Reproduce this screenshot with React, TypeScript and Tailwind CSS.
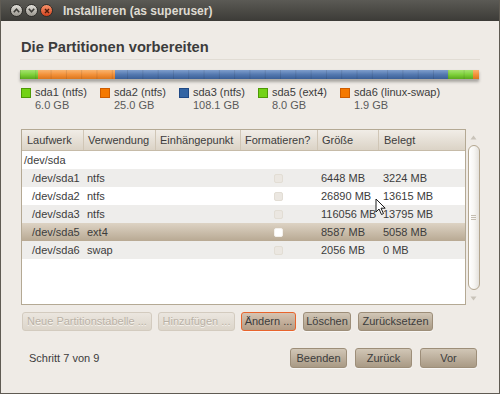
import type { ReactNode } from "react";

type Segment = { gb: number; cls: string };

const segments: Segment[] = [
  { gb: 6.0, cls: "bg-linear-to-b from-[#a6e36f] via-[#7fd13b] to-[#5aa91a]" },
  { gb: 25.0, cls: "bg-linear-to-b from-[#f9b46e] via-[#f3923a] to-[#db761c]" },
  { gb: 108.1, cls: "bg-linear-to-b from-[#809fcd] via-[#5479b0] to-[#3b5f97]" },
  { gb: 8.0, cls: "bg-linear-to-b from-[#a6e36f] via-[#7fd13b] to-[#5aa91a]" },
  { gb: 1.9, cls: "bg-linear-to-b from-[#f9b46e] via-[#f3923a] to-[#db761c]" },
];

const total = segments.reduce((s, p) => s + p.gb, 0);

const legend = [
  { name: "sda1 (ntfs)", size: "6.0 GB", box: "bg-[#73d216] border-[#4e9a06]" },
  { name: "sda2 (ntfs)", size: "25.0 GB", box: "bg-[#f57900] border-[#ce5c00]" },
  { name: "sda3 (ntfs)", size: "108.1 GB", box: "bg-[#3465a4] border-[#204a87]" },
  { name: "sda5 (ext4)", size: "8.0 GB", box: "bg-[#73d216] border-[#4e9a06]" },
  { name: "sda6 (linux-swap)", size: "1.9 GB", box: "bg-[#f57900] border-[#ce5c00]" },
];

const rows = [
  { dev: "/dev/sda", use: "", size: "", used: "", child: false, bg: "bg-white", sel: false },
  { dev: "/dev/sda1", use: "ntfs", size: "6448 MB", used: "3224 MB", child: true, bg: "bg-[#eeedeb]", sel: false },
  { dev: "/dev/sda2", use: "ntfs", size: "26890 MB", used: "13615 MB", child: true, bg: "bg-white", sel: false },
  { dev: "/dev/sda3", use: "ntfs", size: "116056 MB", used: "13795 MB", child: true, bg: "bg-[#eeedeb]", sel: false },
  { dev: "/dev/sda5", use: "ext4", size: "8587 MB", used: "5058 MB", child: true, bg: "bg-linear-to-b from-[#ddd3c4] to-[#b8a993]", sel: true },
  { dev: "/dev/sda6", use: "swap", size: "2056 MB", used: "0 MB", child: true, bg: "bg-[#eeedeb]", sel: false },
];

const headers = ["Laufwerk", "Verwendung", "Einhängepunkt", "Formatieren?", "Größe", "Belegt"];

function Button({
  children,
  w,
  disabled,
  focus,
  className = "",
}: {
  children: ReactNode;
  w: string;
  disabled?: boolean;
  focus?: boolean;
  className?: string;
}) {
  if (disabled) {
    return (
      <div
        className={`${w} ${className} h-full flex items-center justify-center rounded-[3px] border border-[#d3cbbf] bg-linear-to-b from-[#ebe6df] to-[#dcd5ca] text-[#b9b1a6] [text-shadow:0_1px_0_#f7f4ef]`}
      >
        {children}
      </div>
    );
  }
  return (
    <div
      className={`${w} ${className} h-full flex items-center justify-center rounded-[3px] border ${
        focus
          ? "border-[#e8642c] bg-linear-to-b from-[#d6c3b1] to-[#b29c86]"
          : "border-[#9d8e79] bg-linear-to-b from-[#d1c6b6] to-[#a99a85]"
      } text-[#3c3c3c] shadow-[0_1px_0_rgba(255,255,255,0.6)]`}
    >
      {children}
    </div>
  );
}

function Chevron({ up }: { up: boolean }) {
  return (
    <svg width="7" height="5" viewBox="0 0 7 5">
      <path
        d={up ? "M0.8 4.2 L3.5 1.2 L6.2 4.2" : "M0.8 0.8 L3.5 3.8 L6.2 0.8"}
        fill="none"
        stroke="#3c3b37"
        strokeWidth="1.6"
      />
    </svg>
  );
}

export default function App() {
  return (
    <div className="relative w-[500px] h-[394px] flex flex-col overflow-hidden bg-[#efebe6] border-x border-b border-[#5f5b53] font-['Liberation_Sans',Arial,sans-serif] text-[11px] text-[#3c3c3c]">
      {/* title bar */}
      <div className="h-[21px] shrink-0 flex items-center bg-linear-to-b from-[#5b5a55] to-[#3c3b37]">
        <div className="ml-[9px] flex gap-[2px]">
          <div className="w-[13px] h-[13px] rounded-full flex items-center justify-center bg-linear-to-b from-[#e2e0da] to-[#9a978f] border border-[#2e2d2a]">
            <Chevron up />
          </div>
          <div className="w-[13px] h-[13px] rounded-full flex items-center justify-center bg-linear-to-b from-[#e2e0da] to-[#9a978f] border border-[#2e2d2a]">
            <Chevron up={false} />
          </div>
          <div className="w-[13px] h-[13px] rounded-full flex items-center justify-center bg-linear-to-b from-[#f7926a] to-[#d2401a] border border-[#2e2d2a]">
            <svg width="6" height="6" viewBox="0 0 6 6">
              <path d="M1 1 L5 5 M5 1 L1 5" stroke="#4a1a0a" strokeWidth="1.4" />
            </svg>
          </div>
        </div>
        <div className="ml-[10px] text-[12px] font-bold text-[#dfdbd2] leading-none">
          Installieren (as superuser)
        </div>
      </div>

      <div className="px-[19px] flex flex-col">
        <h1 className="mt-[18px] text-[14.7px] leading-[17px] font-bold pl-[1px]">
          Die Partitionen vorbereiten
        </h1>
        <div className="mt-[3px] h-px bg-[#e1dcd4]" />

        {/* partition bar */}
        <div className="relative mt-[10px] h-[10px] flex w-[459px] shadow-[0_2px_3px_rgba(0,0,0,0.3)] border-b border-[#4d4a44]/40">
          {segments.map((s, i) => (
            <div key={i} className={`h-full ${s.cls}`} style={{ width: `${(s.gb / total) * 100}%` }} />
          ))}
          <div className="absolute inset-0 bg-[linear-gradient(to_right,rgba(0,0,0,0.1)_1px,transparent_1px)] bg-[length:15.3px_100%]" />
        </div>

        {/* legend */}
        <div className="mt-[6px] flex gap-[13px] pl-[1px] leading-[13px]">
          {legend.map((l) => (
            <div key={l.name} className="flex gap-[4px]">
              <div className={`mt-[2px] w-[10px] h-[10px] border ${l.box}`} />
              <div className="flex flex-col">
                <span>{l.name}</span>
                <span className="text-[#5a5a5a]">{l.size}</span>
              </div>
            </div>
          ))}
        </div>

        {/* table */}
        <div className="mt-[17px] h-[176px] flex">
          <div className="ml-[1px] w-[445px] h-full flex flex-col border border-[#b4a994] bg-white">
            <div className="h-[21px] shrink-0 grid grid-cols-[61px_72px_85px_77px_61px_1fr] bg-linear-to-b from-[#f1ede7] to-[#dbd3c6] border-b border-[#c6bba8]">
              {headers.map((h, i) => (
                <div
                  key={h}
                  className={`flex items-center ${i === 0 ? "pl-[5px]" : i === 5 ? "pl-[5px] border-l border-[#d0c6b6]" : "pl-[4px] border-l border-[#d0c6b6]"}`}
                >
                  {h}
                </div>
              ))}
            </div>
            {rows.map((r) => (
              <div key={r.dev} className={`h-[18px] grid grid-cols-[61px_72px_85px_77px_61px_1fr] items-center ${r.bg}`}>
                <div className={r.child ? "pl-[10px]" : "pl-[2px]"}>{r.dev}</div>
                <div className="pl-[4px]">{r.use}</div>
                <div />
                <div className="flex justify-center">
                  {r.child && (
                    <div
                      className={`w-[9px] h-[9px] rounded-[2px] border ${
                        r.sel ? "bg-white border-[#f4f1ec]" : "bg-[#ebe7e1] border-[#e2ddd4]"
                      }`}
                    />
                  )}
                </div>
                <div className="pl-[4px]">{r.size}</div>
                <div className="pl-[5px]">{r.used}</div>
              </div>
            ))}
          </div>

          {/* scrollbar */}
          <div className="ml-[1px] w-[13px] h-full flex flex-col items-center">
            <svg className="mt-[6px]" width="7" height="5" viewBox="0 0 7 5">
              <path d="M3.5 0.5 L6.5 4.5 L0.5 4.5 Z" fill="#c9c3b9" />
            </svg>
            <div className="mt-[5px] w-[12px] h-[145px] rounded-full border border-[#b3a68f] bg-linear-to-r from-white via-[#f7f6f3] to-[#e4e1dc] flex flex-col items-center justify-center gap-[1px]">
              <div className="w-[5px] h-px bg-[#c4bdb1]" />
              <div className="w-[5px] h-px bg-[#c4bdb1]" />
              <div className="w-[5px] h-px bg-[#c4bdb1]" />
            </div>
            <svg className="mt-[6px]" width="7" height="5" viewBox="0 0 7 5">
              <path d="M0.5 0.5 L6.5 0.5 L3.5 4.5 Z" fill="#c9c3b9" />
            </svg>
          </div>
        </div>

        {/* partition buttons */}
        <div className="mt-[7px] h-[19px] flex pl-[2px] gap-[6px]">
          <Button w="w-[130px]" disabled>Neue Partitionstabelle ...</Button>
          <Button w="w-[77px]" disabled>Hinzufügen ...</Button>
          <Button w="w-[55px]" focus>Ändern ...</Button>
          <Button w="w-[48px]" className="ml-[1px]">Löschen</Button>
          <Button w="w-[75px]" className="ml-[1px]">Zurücksetzen</Button>
        </div>

        {/* bottom row */}
        <div className="mt-[17px] h-[20px] flex items-center">
          <div className="pl-[9px]">Schritt 7 von 9</div>
          <div className="flex-1" />
          <div className="flex h-full gap-[8px] mr-[3px]">
            <Button w="w-[57px]">Beenden</Button>
            <Button w="w-[57px]">Zurück</Button>
            <Button w="w-[57px]">Vor</Button>
          </div>
        </div>
      </div>

      {/* mouse pointer */}
      <svg className="absolute left-[374px] top-[198px]" width="12" height="18" viewBox="0 0 12 18">
        <path
          d="M1 1 L1 14 L4 11 L6.5 16.5 L8.5 15.6 L6 10.2 L10.2 10.2 Z"
          fill="#ffffff"
          stroke="#1a1a1a"
          strokeWidth="1"
          strokeLinejoin="round"
        />
      </svg>
    </div>
  );
}
